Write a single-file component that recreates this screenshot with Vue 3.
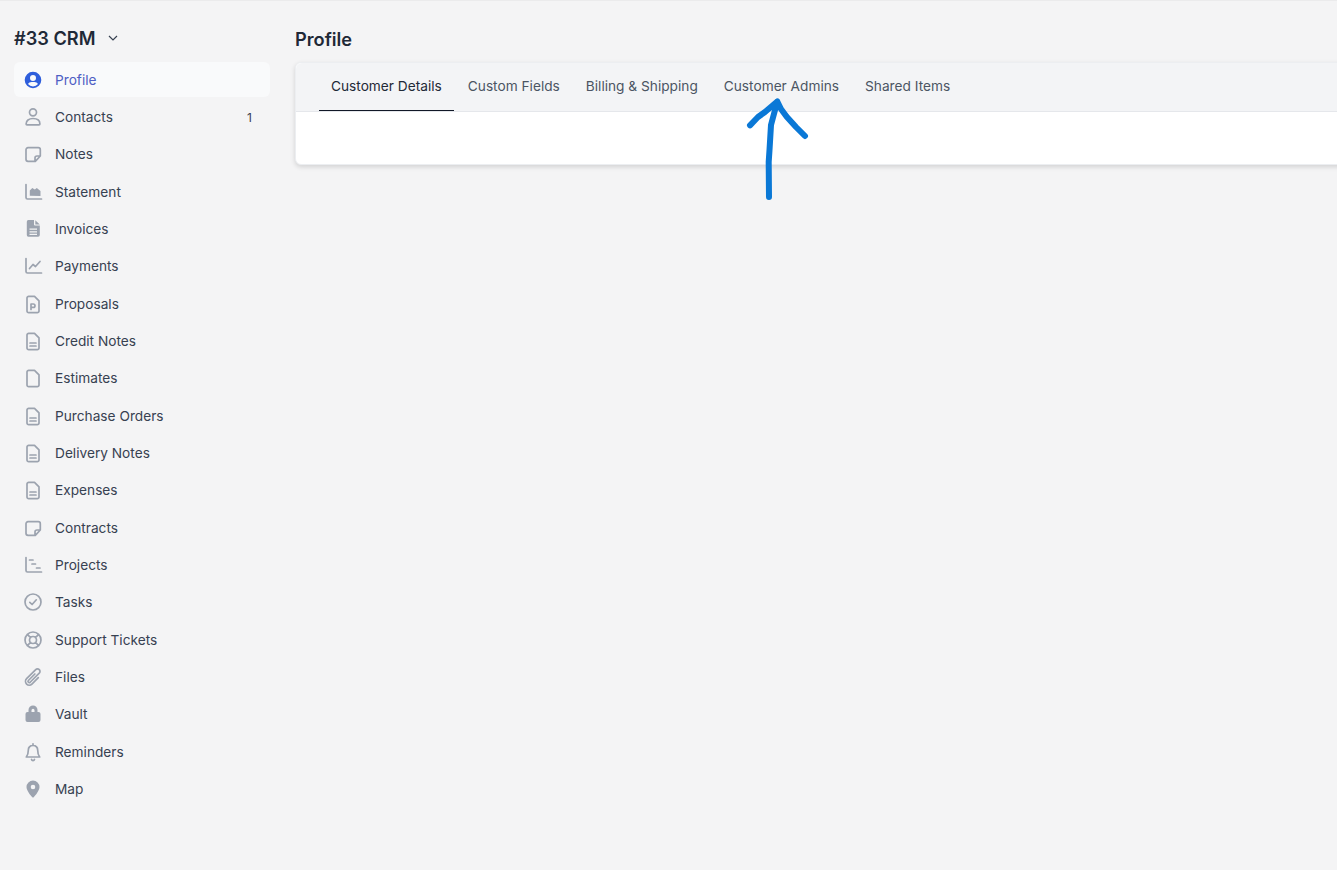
<script setup>
const doc = 'M5.800 2.300h5.700L16 6.800V17a1.700 1.700 0 0 1-1.700 1.700H5.700A1.700 1.700 0 0 1 4 17V4a1.700 1.700 0 0 1 1.800-1.700Z'
const lined = doc + 'M7 12h6M7 15h6'
const note = 'M5 3.700h10.300a2 2 0 0 1 2 2V12l-5 5.300H5a2 2 0 0 1-2-2V5.700a2 2 0 0 1 2-2ZM17 12h-3a2 2 0 0 0-2 2v3'
const items = [
  { label: 'Profile', active: true, fill: 'M10 1.700a8.300 8.300 0 1 0 0 16.600 8.300 8.300 0 0 0 0-16.600Zm0 3.400a3 3 0 1 1 0 6 3 3 0 0 1 0-6Zm0 11.400a6.500 6.500 0 0 1-5-2.400c.7-1.300 2-2.100 3.500-2.100h3c1.500 0 2.800.8 3.500 2.100a6.500 6.500 0 0 1-5 2.400Z' },
  { label: 'Contacts', count: 1, line: 'M13.500 5.300a3.500 3.500 0 1 1-7 0 3.500 3.500 0 0 1 7 0ZM4 17.800c-.6 0-.9-.4-.9-.9 0-3.300 2.700-5.400 6.900-5.400s6.900 2.100 6.900 5.400c0 .5-.3.9-.9.9Z' },
  { label: 'Notes', line: note },
  { label: 'Statement', line: 'M3 2.500V15.500a1.500 1.500 0 0 0 1.500 1.500H18.500', fill: 'M6.800 13.700V8.500l2.500-2.500 2.500 1.500 2-1.500 3.700 3v5Z' },
  { label: 'Invoices', fill: 'M5.300 1h5.700v4.500a1 1 0 0 0 1 1h4.800V16a1.700 1.700 0 0 1-1.700 1.700H5.300A1.700 1.700 0 0 1 3.800 16V2.700A1.700 1.700 0 0 1 5.300 1Zm7 .2 4.500 4.300h-4.500ZM6.500 9.500v1.300h7.500V9.500Zm0 2.700v1.300h7.500v-1.300Zm0 2.600v1.300h7.500v-1.300Z' },
  { label: 'Payments', line: 'M3 2.500V15.500a1.500 1.500 0 0 0 1.500 1.500H18.500M6.500 12.500l3.500-4 2.500 2 4.500-5' },
  { label: 'Proposals', line: doc + 'M8 15.500V10h2.300a1.700 1.700 0 0 1 0 3.400H8' },
  { label: 'Credit Notes', line: lined },
  { label: 'Estimates', line: doc },
  { label: 'Purchase Orders', line: lined },
  { label: 'Delivery Notes', line: lined },
  { label: 'Expenses', line: lined },
  { label: 'Contracts', line: note },
  { label: 'Projects', line: 'M3 2.500V15.500a1.500 1.500 0 0 0 1.500 1.500H18.500M6.500 5h3.500M9 9h3.500M13.500 13h3.500' },
  { label: 'Tasks', line: 'M18 10a8 8 0 1 1-16 0 8 8 0 0 1 16 0ZM6.800 10.300l2.300 2.200 4.200-4.700' },
  { label: 'Support Tickets', line: 'M18 10a8 8 0 1 1-16 0 8 8 0 0 1 16 0ZM13.500 10a3.500 3.500 0 1 1-7 0 3.500 3.500 0 0 1 7 0ZM4.300 4.300l3.300 3.300M15.700 4.300l-3.300 3.300M4.300 15.700l3.300-3.300M15.700 15.700l-3.300-3.300' },
  { label: 'Files', vb: '0 0 24 24', line: 'm18.375 12.739-7.693 7.693a4.500 4.500 0 0 1-6.364-6.364l10.940-10.940A3 3 0 1 1 19.500 7.372L8.552 18.320m5.708-9.941-7.810 7.810a1.500 1.500 0 0 0 2.112 2.130' },
  { label: 'Vault', fill: 'M5.500 8V6a4.500 4.500 0 0 1 9 0V8h1a2 2 0 0 1 2 2v6a2 2 0 0 1-2 2H4.500a2 2 0 0 1-2-2V10a2 2 0 0 1 2-2Zm3 0h3V6.300a1.500 1.500 0 0 0-3 0Z' },
  { label: 'Reminders', line: 'M10 3.500c-3 0-4.700 2-4.700 4.700 0 3.300-.7 5.300-2 6.800h13.400c-1.300-1.500-2-3.500-2-6.800 0-2.700-1.700-4.700-4.700-4.700ZM10 1.800v1.700M8.500 17.500a1.600 1.600 0 0 0 3 0' },
  { label: 'Map', fill: 'M10 1.500a6.500 6.500 0 0 0-6.500 6.500c0 3.600 4.200 8.500 5.600 10a1.200 1.200 0 0 0 1.800 0c1.400-1.500 5.600-6.400 5.600-10A6.500 6.500 0 0 0 10 1.500Zm0 4.200a2.300 2.300 0 1 1 0 4.600 2.300 2.300 0 0 1 0-4.600Z' }
]
const tabs = ['Customer Details', 'Custom Fields', 'Billing & Shipping', 'Customer Admins', 'Shared Items']
</script>

<template>
  <div class="page">
    <aside class="side">
      <div class="brand">
        <span>#33 CRM</span>
        <svg class="chev" viewBox="0 0 12 12"><path d="M2 4l4 4 4-4" /></svg>
      </div>
      <nav class="nav">
        <a v-for="it in items" :key="it.label" class="item" :class="{ active: it.active }">
          <svg class="ico" :viewBox="it.vb || '0 0 20 20'">
            <path v-if="it.fill" class="f" :d="it.fill" fill-rule="evenodd" />
            <path v-if="it.line" class="l" :d="it.line" />
          </svg>
          <span class="label">{{ it.label }}</span>
          <span v-if="it.count" class="count">{{ it.count }}</span>
        </a>
      </nav>
    </aside>
    <main class="main">
      <h1 class="title">Profile</h1>
      <section class="card">
        <div class="tabs">
          <a v-for="(t, i) in tabs" :key="t" class="tab" :class="{ on: i === 0 }">{{ t }}</a>
        </div>
        <div class="body"></div>
      </section>
    </main>
    <svg class="arrow" viewBox="0 0 70 110" aria-hidden="true">
      <path d="M29 107 28.700 72 29.500 60 31 35 37.300 11.500M10 35.300 18 27 25 22 37.300 11.500 41 19 46.700 26.700 56 37 65 46" />
    </svg>
  </div>
</template>

<style>
html, body { margin: 0; overflow: hidden; background: #f4f4f5; }
</style>

<style scoped>
.page {
  position: relative;
  display: flex;
  height: 870px;
  box-sizing: border-box;
  border-top: 1px solid #ebebec;
  padding: 0 0 0 14px;
  overflow: hidden;
  background: #f4f4f5;
  font-family: Inter, "Liberation Sans", sans-serif;
  font-size: 13.700px;
  color: #374151;
}
.side { width: 256px; flex: none; }
.brand {
  display: flex;
  align-items: center;
  gap: 12px;
  height: 26px;
  margin-top: 24px;
  margin-bottom: 11.190px;
  font-size: 18.200px;
  font-weight: 600;
  line-height: 26px;
  color: #1f2937;
}
.chev { width: 12px; height: 12px; fill: none; stroke: #374151; stroke-width: 1.200; }
.nav { display: flex; flex-direction: column; gap: 2.340px; }
.item {
  display: flex;
  align-items: center;
  height: 35px;
  padding: 0 18px 0 8.500px;
  border-radius: 6px;
}
.item.active { background: #f9fafb; color: #4f5fc4; }
.ico { width: 20px; height: 20px; flex: none; margin-right: 12.500px; }
.f { fill: #9ca3af; }
.l {
  fill: none;
  stroke: #9ca3af;
  stroke-width: 1.700;
  stroke-linecap: round;
  stroke-linejoin: round;
  vector-effect: non-scaling-stroke;
}
.active .f { fill: #2f5fdc; }
.label { flex: 1; }
.count { font-size: 12px; }
.main { flex: 1; min-width: 0; margin-left: 25px; }
.title {
  margin: 25px 0 10px;
  font-size: 18.200px;
  line-height: 26px;
  font-weight: 600;
  color: #1f2937;
}
.card {
  margin-right: -12px;
  background: #fff;
  border: 1px solid #eceef1;
  border-radius: 6px;
  box-shadow: 0 2px 5px rgba(0, 0, 0, 0.14);
}
.tabs {
  display: flex;
  gap: 2px;
  height: 48px;
  padding-left: 23px;
  background: #f3f4f6;
  border-bottom: 1px solid #e5e7eb;
  border-radius: 6px 6px 0 0;
}
.tab {
  box-sizing: border-box;
  height: 48px;
  padding: 0 12px;
  line-height: 46px;
  color: #4b5563;
  white-space: nowrap;
}
.tab.on { color: #1f2937; border-bottom: 1px solid #111827; }
.body { height: 52px; }
.arrow {
  position: absolute;
  left: 740px;
  top: 89px;
  width: 70px;
  height: 110px;
  fill: none;
  stroke: #0a78d6;
  stroke-width: 6;
  stroke-linecap: round;
  stroke-linejoin: round;
}
</style>
